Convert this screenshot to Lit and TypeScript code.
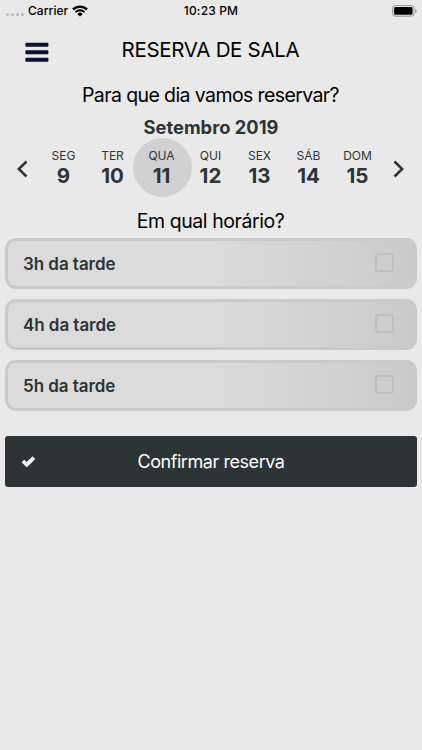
import { LitElement, html, css, svg } from "lit";
import { customElement, property, state } from "lit/decorators.js";

interface Day {
  name: string;
  num: number;
}

const DAYS: Day[] = [
  { name: "SEG", num: 9 },
  { name: "TER", num: 10 },
  { name: "QUA", num: 11 },
  { name: "QUI", num: 12 },
  { name: "SEX", num: 13 },
  { name: "SÁB", num: 14 },
  { name: "DOM", num: 15 },
];

const HOURS = ["3h da tarde", "4h da tarde", "5h da tarde"];

@customElement("status-bar")
class StatusBar extends LitElement {
  static styles = css`
    :host {
      display: grid;
      grid-template-columns: 1fr auto 1fr;
      align-items: center;
      height: 20px;
      padding: 0 5px 0 6px;
      font-size: 12px;
      line-height: 20px;
      font-weight: 500;
      color: #000;
    }
    .left {
      display: flex;
      align-items: center;
      padding-top: 1px;
    }
    .dots {
      display: flex;
      gap: 2px;
      padding-top: 7px;
      margin-right: 4px;
    }
    .dot {
      width: 3px;
      height: 3px;
      border-radius: 50%;
      background: #b9b9b9;
    }
    .carrier {
      letter-spacing: 0.05px;
    }
    .wifi {
      margin-left: 4px;
    }
    .time {
      letter-spacing: 0.15px;
      margin-left: -1px;
      padding-top: 1px;
    }
    .right {
      display: flex;
      justify-content: flex-end;
    }
    svg {
      display: block;
    }
  `;

  render() {
    return html`
      <div class="left">
        <div class="dots">
          ${[0, 1, 2, 3].map(() => html`<span class="dot"></span>`)}
        </div>
        <span class="carrier">Carrier</span>
        <svg class="wifi" width="16" height="12" viewBox="0 0 16 12">
          <path d="M1 4.4A10 10 0 0 1 15 4.4" fill="none" stroke="#000" stroke-width="2.3" />
          <path d="M3.5 7.1A6.4 6.4 0 0 1 12.5 7.1" fill="none" stroke="#000" stroke-width="2" />
          <path d="M8 11.6 5.3 8.9A3.8 3.8 0 0 1 10.7 8.9Z" fill="#000" />
        </svg>
      </div>
      <span class="time">10:23 PM</span>
      <div class="right">
        <svg width="25" height="12" viewBox="0 0 25 12">
          <rect x="0.6" y="0.6" width="21.4" height="10.6" rx="2.6" fill="none" stroke="#929292" />
          <rect x="2.1" y="2.1" width="18.4" height="7.6" rx="1.3" fill="#000" />
          <path d="M23.2 4.2v3.6c1-.4 1.4-1 1.4-1.8s-.4-1.4-1.4-1.8z" fill="#929292" />
        </svg>
      </div>
    `;
  }
}

@customElement("week-picker")
class WeekPicker extends LitElement {
  @property({ type: Number }) selected = 11;

  static styles = css`
    :host {
      display: grid;
      grid-template-columns: 39.5px repeat(7, 49px) 1fr;
      height: 59px;
      align-items: center;
      color: #2d3436;
    }
    .arrow {
      display: flex;
      align-items: center;
      padding: 3px 0 0 16px;
    }
    .arrow.next {
      padding-left: 10.5px;
    }
    .day {
      width: 59px;
      height: 59px;
      box-sizing: border-box;
      justify-self: center;
      margin: 0 -5px;
      padding: 10px 1px 0 0;
      border-radius: 50%;
      text-align: center;
    }
    .day.selected {
      background: #d1d1d1;
    }
    .name {
      font-size: 12px;
      line-height: 16px;
    }
    .num {
      font-size: 20.5px;
      line-height: 24px;
      font-weight: 700;
    }
  `;

  render() {
    return html`
      <div class="arrow">
        <svg width="13" height="18" viewBox="0 0 13 18">
          <path d="M10.5 1.5 2.8 9l7.7 7.5" fill="none" stroke="#2d3436" stroke-width="2.5" />
        </svg>
      </div>
      ${DAYS.map(
        (d) => html`
          <div class="day ${d.num === this.selected ? "selected" : ""}">
            <div class="name">${d.name}</div>
            <div class="num">${d.num}</div>
          </div>
        `,
      )}
      <div class="arrow next">
        <svg width="13" height="18" viewBox="0 0 13 18">
          <path d="M1.5 1.5 9.2 9l-7.7 7.5" fill="none" stroke="#2d3436" stroke-width="2.5" />
        </svg>
      </div>
    `;
  }
}

@customElement("hour-option")
class HourOption extends LitElement {
  @property() label = "";

  static styles = css`
    :host {
      display: flex;
      align-items: center;
      justify-content: space-between;
      box-sizing: border-box;
      height: 51px;
      padding: 0 20px 0 15px;
      border: 3px solid #cacaca;
      border-radius: 11px;
      background: linear-gradient(90deg, #dbdbdb 0%, #dbdbdb 50%, #cacaca 100%);
    }
    .label {
      font-size: 17px;
      line-height: 24px;
      font-weight: 600;
      letter-spacing: -0.05px;
      color: #2d3436;
      padding-top: 1px;
    }
    .box {
      box-sizing: border-box;
      width: 19px;
      height: 19px;
      border: 2px solid #c0c0c0;
      border-radius: 3.5px;
      margin-bottom: 1px;
    }
  `;

  render() {
    return html`<span class="label">${this.label}</span><span class="box"></span>`;
  }
}

@customElement("app-root")
class AppRoot extends LitElement {
  @state() private day = 11;

  static styles = css`
    :host {
      display: block;
      height: 750px;
      overflow: hidden;
      background: #e9e9e9;
      font-family: Inter, "Liberation Sans", sans-serif;
      color: #000;
    }
    .header {
      display: grid;
      grid-template-columns: 48px 1fr 48px;
      align-items: center;
      height: 60px;
      padding: 0 25px;
    }
    .menu {
      display: block;
      margin-top: 4px;
    }
    .title {
      text-align: center;
      font-size: 20.5px;
      line-height: 28px;
      letter-spacing: -0.3px;
      padding-right: 1px;
    }
    .question {
      font-size: 19.5px;
      line-height: 28px;
      text-align: center;
      letter-spacing: -0.6px;
      padding: 1px 1px 0 0;
    }
    .month {
      margin-top: 8px;
      font-size: 18.3px;
      line-height: 21px;
      font-weight: 700;
      letter-spacing: 0.03px;
      text-align: center;
      color: #2d3436;
    }
    .question.second {
      margin-top: 9px;
      letter-spacing: -0.43px;
    }
    .hours {
      display: grid;
      gap: 10px;
      padding: 0 5px;
      margin-top: 2.5px;
    }
    .confirm {
      display: grid;
      grid-template-columns: 14px 1fr 14px;
      align-items: center;
      height: 51px;
      margin: 25.5px 5px 0;
      padding: 0 16px;
      border-radius: 3px;
      background: #2d3436;
      color: #fff;
    }
    .confirm-text {
      text-align: center;
      font-size: 18px;
      line-height: 24px;
      letter-spacing: -0.44px;
      padding-top: 1px;
    }
  `;

  render() {
    return html`
      <status-bar></status-bar>
      <div class="header">
        <svg class="menu" width="24" height="20" viewBox="0 0 24 20">
          ${[0.8, 8.3, 15.8].map(
            (y) => svg`<rect x="0.4" y=${y} width="23" height="3.9" rx="0.8" fill="#0a1330" />`,
          )}
        </svg>
        <div class="title">RESERVA DE SALA</div>
      </div>
      <div class="question">Para que dia vamos reservar?</div>
      <div class="month">Setembro 2019</div>
      <week-picker .selected=${this.day}></week-picker>
      <div class="question second">Em qual horário?</div>
      <div class="hours">
        ${HOURS.map((h) => html`<hour-option .label=${h}></hour-option>`)}
      </div>
      <div class="confirm">
        <svg width="15" height="12" viewBox="0 0 15 12">
          <path d="M1.1 6.3 3.3 4.1 5.7 6.5 11.5 0.9 13.8 3.1 5.7 10.9Z" fill="#fff" stroke="#fff" stroke-width="0.9" stroke-linejoin="round" />
        </svg>
        <span class="confirm-text">Confirmar reserva</span>
      </div>
    `;
  }
}
